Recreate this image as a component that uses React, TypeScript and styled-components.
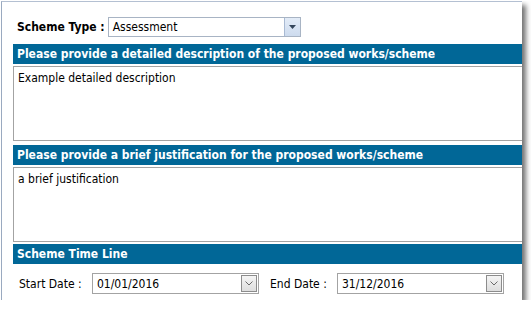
import styled, { createGlobalStyle } from "styled-components";

const GlobalStyle = createGlobalStyle`
  body {
    margin: 1px 0 0 1px;
    background: #ffffff;
    font-family: "DejaVu Sans", Tahoma, sans-serif;
    font-size: 12px;
    color: #000000;
  }
`;

// ─── Styled Components ───────────────────────────────────────────────────────

const StyledPanel = styled.div`
  width: 521px;
  height: 299px;
  box-sizing: border-box;
  padding: 15px 0 0 11px;
  background: #ffffff;
  border-left: 1px solid #9aaac0;
  border-top: 1px solid #b4c0d2;
  box-shadow: 4px 4px 5px rgba(0, 0, 0, 0.55);
  display: flex;
  flex-direction: column;
  font-stretch: semi-condensed;
`;

const StyledTypeRow = styled.div`
  display: flex;
  align-items: center;
  gap: 3px;
  padding-left: 4px;
  height: 20px;
`;

const StyledBoldLabel = styled.label`
  font-weight: bold;
`;

const StyledSelect = styled.div`
  width: 193px;
  height: 20px;
  box-sizing: border-box;
  border: 1px solid #a8b4c4;
  display: flex;
  align-items: stretch;
  background: #ffffff;
`;

const StyledSelectValue = styled.div`
  flex: 1;
  display: flex;
  align-items: center;
  padding-left: 4px;
`;

const StyledSelectButton = styled.div`
  width: 15px;
  border-left: 1px solid #a9bad3;
  background: linear-gradient(#e3ecf8, #cddbee);
  display: flex;
  align-items: center;
  justify-content: center;
`;

const StyledHeader = styled.div<{ $mt: number }>`
  margin-top: ${(p) => p.$mt}px;
  height: 20px;
  background: #016797;
  color: #ffffff;
  font-weight: bold;
  display: flex;
  align-items: center;
  padding-left: 4px;
`;

const StyledTextArea = styled.div`
  margin-top: 2px;
  height: 75px;
  box-sizing: border-box;
  border: 1px solid #a3a3a3;
  border-right: none;
  padding: 4px 4px;
`;

const StyledDateRow = styled.div`
  margin-top: 9px;
  display: flex;
  align-items: center;
  padding-left: 6px;
`;

const StyledDateLabel = styled.label<{ $w: number }>`
  width: ${(p) => p.$w}px;
`;

const StyledDateInput = styled.div`
  width: 167px;
  height: 21px;
  box-sizing: border-box;
  border: 1px solid #a3a3a3;
  display: flex;
  align-items: center;
  padding: 0 1px 0 4px;
  margin-right: 11px;
`;

const StyledDateText = styled.div`
  flex: 1;
`;

const StyledDateButton = styled.div`
  width: 16px;
  height: 17px;
  box-sizing: border-box;
  border: 1px solid #8c8c8c;
  background: linear-gradient(#f4f4f4, #dedede);
  display: flex;
  align-items: center;
  justify-content: center;
`;

// ─── Helpers ─────────────────────────────────────────────────────────────────

const Triangle = () => (
  <svg width="7" height="4" viewBox="0 0 7 4">
    <path d="M0 0h7L3.5 4z" fill="#34465c" />
  </svg>
);

const Chevron = () => (
  <svg width="8" height="5" viewBox="0 0 8 5">
    <path d="M0.5 0.5L4 4L7.5 0.5" fill="none" stroke="#6a6a6a" strokeWidth="1" />
  </svg>
);

const DateField = ({ value }: { value: string }) => (
  <StyledDateInput>
    <StyledDateText>{value}</StyledDateText>
    <StyledDateButton>
      <Chevron />
    </StyledDateButton>
  </StyledDateInput>
);

// ─── Component ───────────────────────────────────────────────────────────────

const App = () => {
  return (
    <>
      <GlobalStyle />
      <StyledPanel>
        <StyledTypeRow>
          <StyledBoldLabel>Scheme Type :</StyledBoldLabel>
          <StyledSelect>
            <StyledSelectValue>Assessment</StyledSelectValue>
            <StyledSelectButton>
              <Triangle />
            </StyledSelectButton>
          </StyledSelect>
        </StyledTypeRow>

        <StyledHeader $mt={7}>
          Please provide a detailed description of the proposed works/scheme
        </StyledHeader>
        <StyledTextArea>Example detailed description</StyledTextArea>

        <StyledHeader $mt={4}>
          Please provide a brief justification for the proposed works/scheme
        </StyledHeader>
        <StyledTextArea>a brief justification</StyledTextArea>

        <StyledHeader $mt={2}>Scheme Time Line</StyledHeader>
        <StyledDateRow>
          <StyledDateLabel $w={73}>Start Date :</StyledDateLabel>
          <DateField value="01/01/2016" />
          <StyledDateLabel $w={67}>End Date :</StyledDateLabel>
          <DateField value="31/12/2016" />
        </StyledDateRow>
      </StyledPanel>
    </>
  );
};

App.displayName = "App";
export default App;
